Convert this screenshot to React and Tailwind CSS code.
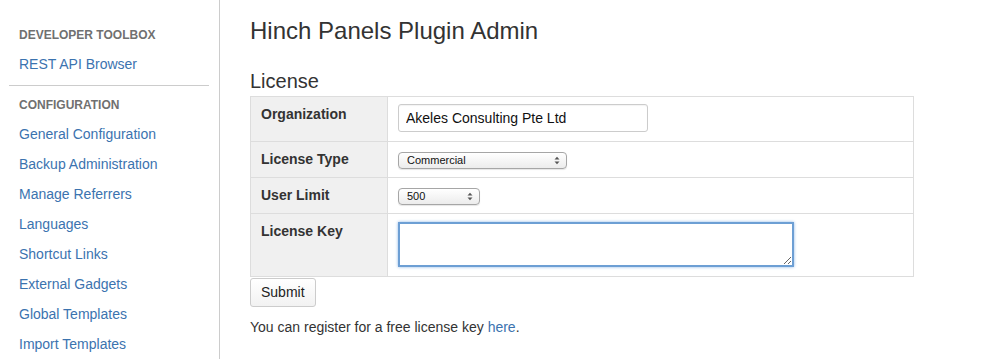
import React from "react";

const configLinks = [
  "General Configuration",
  "Backup Administration",
  "Manage Referrers",
  "Languages",
  "Shortcut Links",
  "External Gadgets",
  "Global Templates",
  "Import Templates",
];

const SelectBox = ({ value, width }) => (
  <div className={`relative ${width}`}>
    <select
      defaultValue={value}
      className="block appearance-none w-full h-[17px] rounded-[4px] border border-[#a6a6a6] bg-gradient-to-b from-white to-[#ececec] pl-[8px] text-[11px] leading-[15px] text-[#111] shadow-[0_1px_1px_rgba(0,0,0,0.1)] outline-none"
    >
      <option>{value}</option>
    </select>
    <svg
      className="absolute right-[7px] top-[4px] pointer-events-none"
      width="6"
      height="9"
      viewBox="0 0 6 9"
    >
      <path d="M0.5 3.5 L3 0.8 L5.5 3.5 Z" fill="#555" />
      <path d="M0.5 5.5 L3 8.2 L5.5 5.5 Z" fill="#555" />
    </svg>
  </div>
);

const App = () => {
  return (
    <div
      className="flex w-[981px] h-[359px] overflow-hidden bg-white text-[#333]"
      style={{ fontFamily: '"Liberation Sans", Arial, sans-serif' }}
    >
      {/* SIDEBAR */}
      <div className="w-[220px] shrink-0 border-r border-[#ccc] pt-[27px]">
        <div className="px-[19px] text-[12px] leading-[16px] font-bold text-[#707070]">
          DEVELOPER TOOLBOX
        </div>
        <div className="px-[19px] mt-[13px] text-[14px] leading-[16px] text-[#3b73af]">
          REST API Browser
        </div>
        <div className="mx-[9px] mt-[13px] w-[200px] border-t border-[#ccc]" />
        <div className="px-[19px] mt-[11px] text-[12px] leading-[16px] font-bold text-[#707070]">
          CONFIGURATION
        </div>
        <div className="flex flex-col gap-[14px] px-[19px] mt-[13px] text-[14px] leading-[16px] text-[#3b73af]">
          {configLinks.map((link) => (
            <div key={link}>{link}</div>
          ))}
        </div>
      </div>

      {/* MAIN */}
      <div className="flex-1 pl-[30px] pt-[17px]">
        <h1 className="text-[24px] leading-[28px] text-[#333]">
          Hinch Panels Plugin Admin
        </h1>
        <h2 className="mt-[24px] text-[20px] leading-[24px] text-[#333]">
          License
        </h2>

        <table className="mt-[3px] w-[664px] border-collapse border border-[#ddd] text-[14px]">
          <tbody>
            <tr className="h-[45px]">
              <td className="w-[137px] align-top bg-[#f0f0f0] border border-[#ddd] px-[10px] pt-[8px] font-bold leading-[18px]">
                Organization
              </td>
              <td className="align-top border border-[#ddd] pl-[10px] pt-[7px]">
                <input
                  defaultValue="Akeles Consulting Pte Ltd"
                  className="block w-[250px] h-[28px] rounded-[3px] border border-[#ccc] px-[7px] text-[14px] text-[#111] shadow-[inset_0_1px_1px_rgba(0,0,0,0.05)] outline-none"
                />
              </td>
            </tr>
            <tr className="h-[36px]">
              <td className="align-top bg-[#f0f0f0] border border-[#ddd] px-[10px] pt-[8px] font-bold leading-[18px]">
                License Type
              </td>
              <td className="align-top border border-[#ddd] pl-[10px] pt-[10px]">
                <SelectBox value="Commercial" width="w-[169px]" />
              </td>
            </tr>
            <tr className="h-[36px]">
              <td className="align-top bg-[#f0f0f0] border border-[#ddd] px-[10px] pt-[8px] font-bold leading-[18px]">
                User Limit
              </td>
              <td className="align-top border border-[#ddd] pl-[10px] pt-[10px]">
                <SelectBox value="500" width="w-[82px]" />
              </td>
            </tr>
            <tr className="h-[63px]">
              <td className="align-top bg-[#f0f0f0] border border-[#ddd] px-[10px] pt-[8px] font-bold leading-[18px]">
                License Key
              </td>
              <td className="align-top border border-[#ddd] pl-[10px] pt-[8px]">
                <textarea
                  autoFocus
                  className="block w-[396px] h-[45px] border-2 border-[#6d9fd4] shadow-[0_0_3px_#8fb8e6] outline-none text-[14px]"
                />
              </td>
            </tr>
          </tbody>
        </table>

        <button className="mt-[1px] h-[29px] px-[10px] rounded-[3px] border border-[#ccc] bg-gradient-to-b from-white to-[#f2f2f2] text-[14px] text-[#222]">
          Submit
        </button>

        <p className="mt-[11px] text-[14px] leading-[18px] text-[#333]">
          You can register for a free license key{" "}
          <span className="text-[#3b73af]">here</span>.
        </p>
      </div>
    </div>
  );
};

export default App;
